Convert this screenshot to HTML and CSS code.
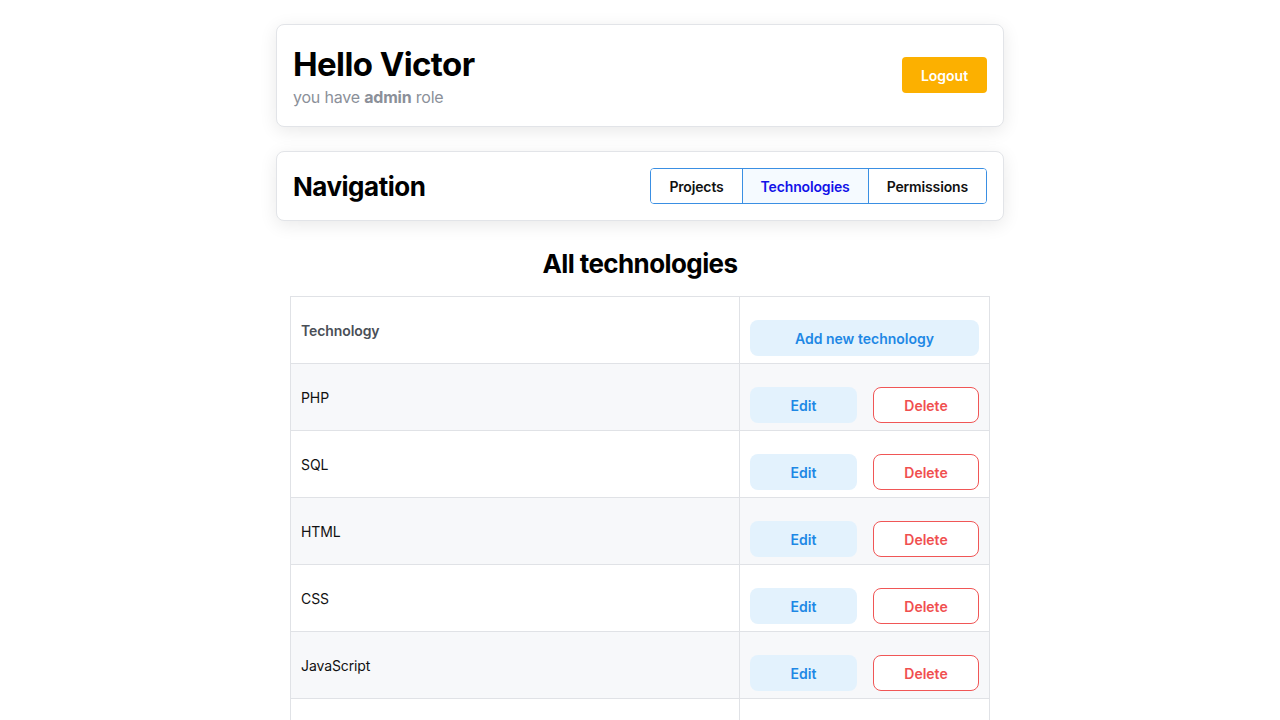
FILE: index.html
```html
<!DOCTYPE html>
<html>
<head>
<meta charset="utf-8">
<link rel="stylesheet" href="styles.css">
</head>
<body>
<div class="container">
  <div class="card header-card">
    <div class="greeting">
      <h1 class="hello">Hello Victor</h1>
      <p class="role">you have <b>admin</b> role</p>
    </div>
    <button class="btn-logout">Logout</button>
  </div>
  <div class="card nav-card">
    <h2 class="nav-title">Navigation</h2>
    <div class="btn-group">
      <button class="grp-btn">Projects</button>
      <button class="grp-btn active">Technologies</button>
      <button class="grp-btn">Permissions</button>
    </div>
  </div>
  <div class="content">
    <h2 class="page-title">All technologies</h2>
    <table class="tech-table">
      <tr class="head">
        <th class="c-name">Technology</th>
        <th class="c-act"><button class="btn-light wide">Add new technology</button></th>
      </tr>
      <tr class="odd"><td class="c-name">PHP</td><td class="c-act"><div class="acts"><button class="btn-light">Edit</button><button class="btn-del">Delete</button></div></td></tr>
      <tr><td class="c-name">SQL</td><td class="c-act"><div class="acts"><button class="btn-light">Edit</button><button class="btn-del">Delete</button></div></td></tr>
      <tr class="odd"><td class="c-name">HTML</td><td class="c-act"><div class="acts"><button class="btn-light">Edit</button><button class="btn-del">Delete</button></div></td></tr>
      <tr><td class="c-name">CSS</td><td class="c-act"><div class="acts"><button class="btn-light">Edit</button><button class="btn-del">Delete</button></div></td></tr>
      <tr class="odd"><td class="c-name">JavaScript</td><td class="c-act"><div class="acts"><button class="btn-light">Edit</button><button class="btn-del">Delete</button></div></td></tr>
      <tr><td class="c-name"></td><td class="c-act"></td></tr>
    </table>
  </div>
</div>
</body>
</html>
```
FILE: styles.css
```css
* { box-sizing: border-box; }
body {
  margin: 0;
  font-family: Inter, "Noto Sans", sans-serif;
  color: #000;
  background: #fff;
}
.container {
  width: 728px;
  margin: 0 auto;
  padding-top: 24px;
}
.card {
  background: #fff;
  border: 1px solid #e2e4e8;
  border-radius: 8px;
  box-shadow: 0 4px 18px rgba(0,0,0,0.09);
  display: flex;
  align-items: center;
  justify-content: space-between;
  padding: 0 16px;
}
.header-card {
  height: 103px;
}
.hello {
  margin: 0;
  font-size: 33px;
  font-weight: 700;
  line-height: 40px;
  letter-spacing: -0.6px;
}
.role {
  margin: 3px 0 0;
  font-size: 16px;
  line-height: 20px;
  color: #8b9099;
  letter-spacing: -0.2px;
}
.role b { font-weight: 700; }
.btn-logout {
  width: 85px;
  height: 36px;
  border: none;
  border-radius: 4px;
  background: #fcb000;
  color: #fff;
  font-family: inherit;
  font-size: 14px;
  font-weight: 600;
  margin-top: -1px;
}
.nav-card {
  margin-top: 24px;
  height: 70px;
}
.nav-title {
  margin: 0;
  font-size: 26px;
  font-weight: 700;
  letter-spacing: -0.5px;
}
.btn-group {
  display: flex;
  border: 1px solid #3a8fe3;
  border-radius: 4px;
  height: 36px;
  overflow: hidden;
}
.grp-btn {
  border: none;
  background: #fff;
  font-family: inherit;
  font-size: 14px;
  font-weight: 600;
  color: #111;
  padding: 0 18px;
  height: 34px;
  letter-spacing: -0.15px;
}
.grp-btn + .grp-btn { border-left: 1px solid #3a8fe3; }
.grp-btn.active {
  background: #f5faff;
  color: #1212e8;
}
.content {
  margin-top: 23px;
  background: #fff;
  padding-top: 4px;
}
.page-title {
  margin: 0 0 16px;
  text-align: center;
  font-size: 26px;
  font-weight: 700;
  line-height: 32px;
  letter-spacing: -0.6px;
}
.tech-table {
  width: 700px;
  margin: 0 auto;
  border-collapse: collapse;
}
.tech-table th, .tech-table td {
  border: 1px solid #e0e2e6;
  padding: 7px 10px;
  height: 67px;
  vertical-align: middle;
  text-align: left;
  font-size: 14px;
  letter-spacing: -0.1px;
}
.tech-table th {
  font-weight: 600;
  color: #4a4f57;
}
.tech-table td.c-name { color: #111; }
.c-name { width: 450px; }
.odd { background: #f7f8fa; }
.acts {
  display: flex;
  gap: 16px;
}
.btn-light {
  margin-top: 16px;
  height: 36px;
  width: 107px;
  border: none;
  border-radius: 8px;
  background: #e3f2fd;
  color: #1e88e5;
  font-family: inherit;
  font-size: 14px;
  font-weight: 600;
}
.btn-light.wide { width: 229px; display: block; }
.btn-del {
  margin-top: 16px;
  height: 36px;
  width: 106px;
  border: 1px solid #f05656;
  border-radius: 8px;
  background: #fff;
  color: #f04f4f;
  font-family: inherit;
  font-size: 14px;
  font-weight: 600;
}
```
